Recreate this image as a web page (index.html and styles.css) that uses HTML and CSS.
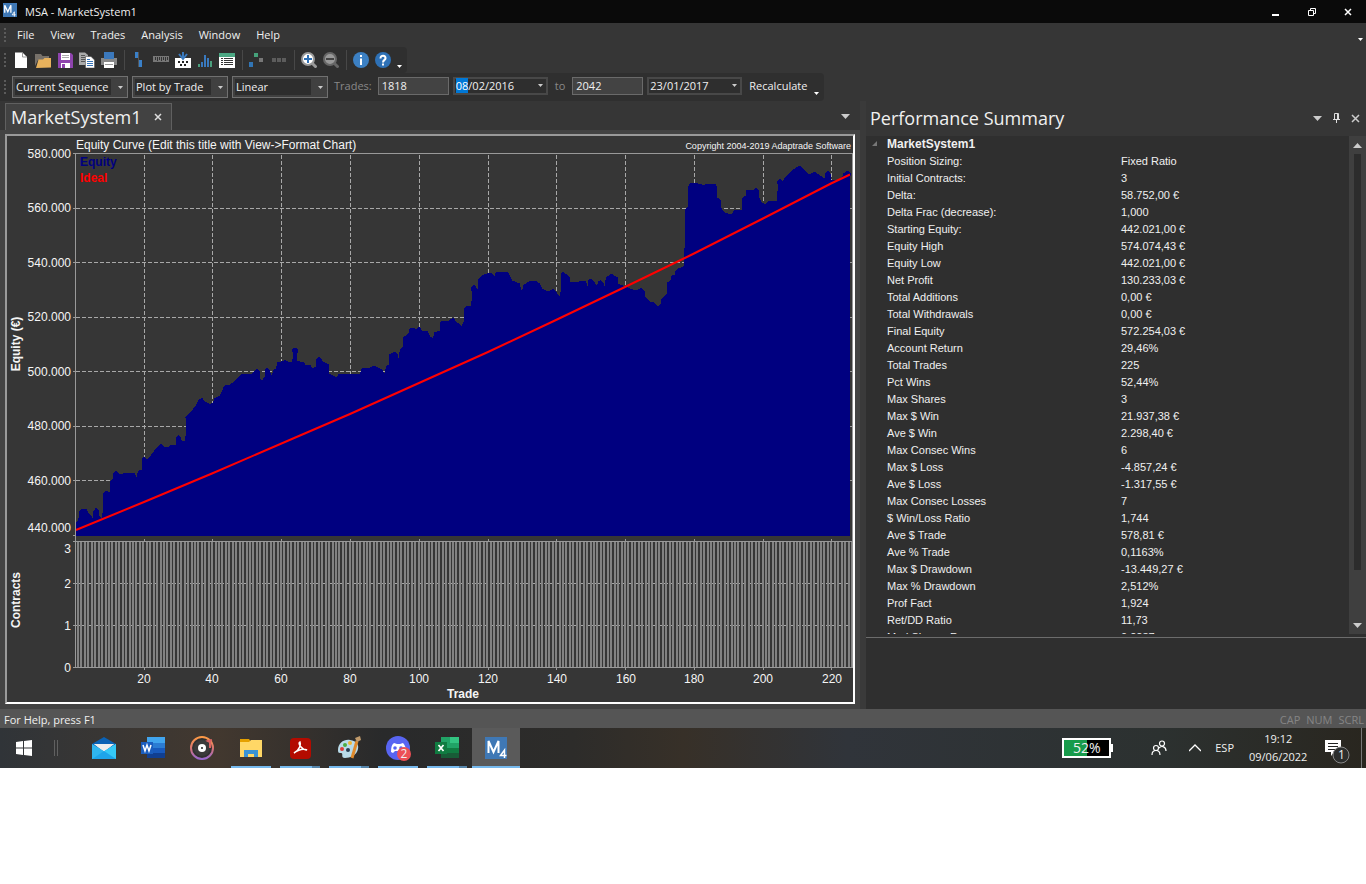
FILE: index.html
```html
<!DOCTYPE html>
<html lang="en">
<head>
<meta charset="utf-8">
<title>MSA - MarketSystem1</title>
<link rel="stylesheet" href="styles.css">
</head>
<body>
<div class="app">
  <header class="titlebar">
    <svg class="app-icon" viewBox="0 0 32 32"><rect width="32" height="32" fill="#3f78b5"/><path d="M4 22V5l7 15 7-15v17" fill="none" stroke="#fff" stroke-width="3"/><path d="M26 31V20l-5 7h8" fill="none" stroke="#fff" stroke-width="2"/></svg>
    <h1 class="title">MSA - MarketSystem1</h1>
    <div class="window-buttons">
      <button aria-label="Minimize"><svg viewBox="0 0 10 10"><path d="M1 8h7" stroke="#fff" stroke-width="2"/></svg></button>
      <button aria-label="Restore"><svg viewBox="0 0 10 10"><path d="M1.500 3.500h5v5h-5zM3.500 3V1.500h5v5H7" fill="none" stroke="#fff"/></svg></button>
      <button aria-label="Close"><svg viewBox="0 0 10 10"><path d="M2 2l6 6M8 2L2 8" stroke="#fff" stroke-width="1.500"/></svg></button>
    </div>
  </header>

  <nav class="menubar">
    <span class="grip"></span>
    <button>File</button><button>View</button><button>Trades</button><button>Analysis</button><button>Window</button><button>Help</button>
    <svg class="menu-more" viewBox="0 0 5 3"><path d="M0 0h5L2.500 3z" fill="#fff"/></svg>
  </nav>

  <div class="toolbar tools">
    <span class="grip"></span>
    <button aria-label="New"><svg viewBox="0 0 16 16"><path d="M2 .5h7.500L14 5v11H2z" fill="#fff"/><path d="M9.500.5V5H14" fill="none" stroke="#999"/></svg></button>
    <button aria-label="Open"><svg viewBox="0 0 16 16"><path d="M0 14V2h6l1.500 2H14V8H3z" fill="#77716a"/><path d="M3.500 7.500H8L9.500 6H16v9.500l-15 .5z" fill="#e8b25c"/></svg></button>
    <button aria-label="Save"><svg viewBox="0 0 16 16"><path d="M1 1h13l2 2v13H1z" fill="#8e44ad"/><path d="M4 1h9v7H4zM4 11h9v5H4z" fill="#fff"/><path d="M5 3.500h7M5 5.500h7" stroke="#aaa"/><path d="M5 12h3v4H5z" fill="#8e44ad"/></svg></button>
    <button aria-label="Copy"><svg viewBox="0 0 16 16"><path d="M0 .5h6L9 3v10H0z" fill="#aaa"/><path d="M2 3.500h4M2 5.500h5M2 7.500h5M2 9.500h4" stroke="#555"/><path d="M6.500 4.500H12L15.500 8v8h-9z" fill="#fff" stroke="#444" stroke-width=".5"/><path d="M8 7.500h3M8 9.500h6M8 11.500h6M8 13.500h6" stroke="#3874b8"/></svg></button>
    <button aria-label="Print"><svg viewBox="0 0 16 16"><path d="M3 0h10v4H3z" fill="#3b78bb"/><path d="M0 6h16v7H0z" fill="#888"/><path d="M3 1h10v6H3z" fill="#3b78bb"/><path d="M3 10h10v6H3z" fill="#fff"/><path d="M4 12.500h8" stroke="#999"/></svg></button>
    <span class="sep"></span>
    <button aria-label="Trade bars"><svg viewBox="0 0 16 16"><path d="M4 0h3v6H4zM8 8h3v7H8z" fill="#3a80c8"/><path d="M7.500 0v15" stroke="#555"/></svg></button>
    <button aria-label="Ruler"><svg viewBox="0 0 16 16"><path d="M0 4h16v6H0z" fill="#777"/><path d="M2.500 5v3M4.500 5v4M6.500 5v3M8.500 5v4M10.500 5v3M12.500 5v4M14.500 5v3" stroke="#333"/></svg></button>
    <button aria-label="Randomize"><svg viewBox="0 0 16 16"><path d="M0 6h16v10H0z" fill="#fff"/><path d="M3 9h2v2H3zm4 0h2v2H7zm4 0h2v2h-2zM5 12h2v2H5zm4 0h2v2H9z" fill="#222"/><path d="M8 0v6M4 2l4 5 4-5" fill="none" stroke="#3979be" stroke-width="2"/></svg></button>
    <button aria-label="Histogram"><svg viewBox="0 0 16 16"><path d="M1 12h2v3H1zm12-3h2v6h-2z" fill="#4b9f7d"/><path d="M4 10h2v5H4zm3-7h2v12H7zm3 3h2v9h-2z" fill="#3979be"/></svg></button>
    <button aria-label="Report"><svg viewBox="0 0 16 16"><path d="M0 1h16v15H0z" fill="#fff"/><path d="M0 1h16v4H0z" fill="#4ba783"/><path d="M2 6.500h2M5 6.500h9M2 8.500h2M5 8.500h9M2 10.500h2M5 10.500h9M2 12.500h2M5 12.500h9" stroke="#333"/></svg></button>
    <span class="sep"></span>
    <button aria-label="Dependency"><svg viewBox="0 0 16 16"><path d="M5 1h4v4H5z" fill="#45a17a"/><path d="M0 10h4v5H0z" fill="#3175b5"/><path d="M10 6h4v4h-4z" fill="#777"/></svg></button>
    <button aria-label="Sequence"><svg viewBox="0 0 16 16"><path d="M1 6h4v4H1zm5 0h4v4H6zm5 0h4v4h-4z" fill="#5c5c5c"/></svg></button>
    <span class="sep"></span>
    <button aria-label="Zoom in"><svg viewBox="0 0 16 16"><path d="M10.500 10.500l5 5" stroke="#999" stroke-width="3"/><circle cx="7" cy="7" r="6" fill="#fff" stroke="#999" stroke-width="2"/><path d="M7 3v8M3 7h8" stroke="#2f70b5" stroke-width="2"/></svg></button>
    <button aria-label="Zoom out"><svg viewBox="0 0 16 16"><path d="M10.500 10.500l5 5" stroke="#666" stroke-width="3"/><circle cx="7" cy="7" r="6" fill="#999" stroke="#666" stroke-width="2"/><path d="M3 7h8" stroke="#444" stroke-width="2"/></svg></button>
    <span class="sep"></span>
    <button aria-label="About"><svg viewBox="0 0 16 16"><circle cx="8" cy="8" r="8" fill="#3c80c3"/><path d="M8 3v2M8 6.500V13" stroke="#fff" stroke-width="2"/></svg></button>
    <button aria-label="Help"><svg viewBox="0 0 16 16"><circle cx="8" cy="8" r="8" fill="#2e71b6"/><path d="M5.500 6.500C5.500 2.500 11 3 10.500 6.500 10.300 8 8 8 8 10.500M8 11.500v2" fill="none" stroke="#fff" stroke-width="2"/></svg></button>
    <svg class="more" viewBox="0 0 5 3"><path d="M0 0h5L2.500 3z" fill="#fff"/></svg>
  </div>

  <div class="toolbar options">
    <span class="grip"></span>
    <div class="combo wide"><select aria-label="Sequence"><option>Current Sequence</option></select><svg viewBox="0 0 5 3"><path d="M0 0h5L2.500 3z" fill="#ccc"/></svg></div>
    <div class="combo"><select aria-label="Plot mode"><option>Plot by Trade</option></select><svg viewBox="0 0 5 3"><path d="M0 0h5L2.500 3z" fill="#ccc"/></svg></div>
    <div class="combo"><select aria-label="Scale"><option>Linear</option></select><svg viewBox="0 0 5 3"><path d="M0 0h5L2.500 3z" fill="#ccc"/></svg></div>
    <label class="caption trades" for="first">Trades:</label>
    <input id="first" value="1818">
    <button class="date" aria-label="Start date"><span><mark>08</mark>/02/2016</span><svg viewBox="0 0 5 3"><path d="M0 0h5L2.500 3z" fill="#ccc"/></svg></button>
    <label class="caption" for="last">to</label>
    <input id="last" value="2042">
    <button class="date" aria-label="End date"><span>23/01/2017</span><svg viewBox="0 0 5 3"><path d="M0 0h5L2.500 3z" fill="#ccc"/></svg></button>
    <button class="recalc">Recalculate</button>
    <svg class="more" viewBox="0 0 5 3"><path d="M0 0h5L2.500 3z" fill="#fff"/></svg>
  </div>

  <main class="workspace">
    <section class="document">
      <div class="tabs">
        <div class="tab"><span>MarketSystem1</span><button aria-label="Close tab"><svg viewBox="0 0 8 8"><path d="M1 1l6 6M7 1L1 7" stroke="#ddd" stroke-width="1.500"/></svg></button></div>
        <button class="tab-menu" aria-label="Open documents"><svg viewBox="0 0 9 5"><path d="M0 0h9L4.500 5z" fill="#ccc"/></svg></button>
      </div>
      <div class="chart-area">
        <div class="chart-frame">
          <svg class="chart" viewBox="7 136 846 566" role="img" aria-label="Equity curve">
            <g class="grid">
              <path d="M76 208.500H850M76 262.500H850M76 317.500H850M76 371.500H850M76 426.500H850M76 480.500H850"/>
              <path d="M144.500 155V535M212.500 155V535M281.500 155V535M350.500 155V535M419.500 155V535M488.500 155V535M556.500 155V535M625.500 155V535M694.500 155V535M763.500 155V535M831.500 155V535"/>
              <path d="M76 583.500H850M76 625.500H850"/>
            </g>
            <path class="equity" d="M76 535.500L76 522.500 78 521 79.500 511.500 81.500 508.500 86.500 509 88.500 513 91 515 92.500 518 93 512 96 507.500 99 510 99.500 516 102 518 103 508 103.500 492.500 105.500 490.500 109.500 492 110.500 481.500 113 478.500 113 473 116 470.500 119 474 126 473 134.500 473 136.500 477.500 138 471 141.500 469.500 141.500 459 144 456.500 147 459 149.500 457.500 153.500 451.500 156.500 447.500 160.500 443.500 164 446.500 168.500 446.500 171 444.500 175.500 445.500 175.500 437.500 178 435 180.500 437.500 181 440 185 441.500 186 430 185.500 417.500 187.500 415 191.500 411 195 406.500 199 399.500 202 397.500 204.500 401.500 209.500 404 212.500 402.500 214.500 398.500 220 395.500 223.500 387.500 226 384.500 230 384.500 235 380.500 241.500 374 252.500 373.500 256.500 368.500 259.500 371.500 260 378.500 262 380.500 264.500 376.500 264.500 370 267 367.500 269.500 370 271.500 375.500 273.500 370 276 368.500 277.500 362 281.500 361.500 285 360 288.500 362 292 361.500 293.500 355 292 351 292.500 349 295 347.500 297.500 349 298 351 297 355 297.500 361 304 362.500 306 365.500 310 364.500 312.500 368 316.500 366 316 359.500 319 356.500 322 359.500 322.500 361.500 328.500 364 329.500 373.500 336.500 377.500 338.500 374 360 373.500 362 368 370 367.500 374 365.500 378.500 368 382 369.500 384.500 373.500 386 366.500 388.500 364.500 388.500 355 394.500 351.500 397.500 354.500 398.500 358.500 400 349 403 346.500 402.500 337.500 408.500 333.500 409.500 328.500 412 327.500 416.500 329 419 326.500 422.500 331 428 331.500 430 336.500 433 338.500 434.500 332 439.500 331 440.500 321.500 448.500 321 453 317.500 456.500 322 461.500 325.500 464 321.500 464 308.500 466.500 305.500 471 306.500 472 295 471 287.500 474 284.500 477.500 289 478.500 278.500 483.500 274.500 490.500 272.500 494.500 276.500 495.500 272.500 500 271.500 507.500 271.500 510.500 276.500 512 280.500 519.500 283.500 522 291.500 523.500 285 528.500 281.500 535 280.500 539.500 283.500 542.500 289 547.500 291.500 553.500 288.500 559.500 296.500 561 290 560.500 274 562.500 271.500 569.500 276.500 570 282 576.500 282.500 580.500 280.500 586 281 587.500 286.500 588.500 280 590.500 278.500 594 281.500 596.500 285.500 598.500 281.500 600.500 280 603.500 282.500 604.500 285.500 606 277.500 611 273.500 617.500 277.500 618 283.500 625 286.500 635 290.500 641.500 288 644.500 290.500 645.500 296.500 650 301.500 654 302 657.500 306.500 660.500 304 661 299.500 666.500 294.500 667.500 282.500 670.500 280 671.500 275.500 675 274.500 674.500 271.500 677.500 268.500 683.500 266.500 685.500 230 684.500 210 687.500 207.500 688.500 195 687.500 187.500 690 183.500 694.500 182.500 703.500 185 708.500 183.500 715 183.500 717 187.500 717.500 197.500 720.500 200.500 721.500 208.500 725 212.500 731.500 214.500 734 210.500 742 209.500 742.500 197.500 746 195.500 746.500 190 753.500 189.500 756 187.500 759 190.500 759.500 198.500 762 202.500 765.500 204 768.500 200.500 776.500 201 778 186.500 777 181.500 779.500 178.500 782.500 181 786.500 176 794 169 799.500 165.500 802.500 168.500 806.500 172.500 810 174.500 814 171.500 825 178.500 825 173.500 828 170.500 830.500 173.500 830.500 180 836.500 180.500 842.500 176.500 843.500 173.500 847.500 170.500 851.500 173.500 850 176.500 850 535.500Z"/>
            <path class="ideal" d="M76 530L144 502 212 473.500 300 435.500 350 414 419 383 488 352 556 320 625 287 694 253.500 763 218.500 831 183.500 850 174.500"/>
            <path class="bars" d="M77 604.500H852"/>
            <g class="axes">
              <path d="M75.500 153V668M852.500 153V668M73 153.500H853M73 535.500H76M73 541.500H853M73 667.500H853M73 208.500h3M73 262.500h3M73 317.500h3M73 371.500h3M73 426.500h3M73 480.500h3M73 583.500h3M73 625.500h3M850 208.500h3M850 262.500h3M850 317.500h3M850 371.500h3M850 426.500h3M850 480.500h3"/>
              <path d="M144.500 668v2M212.500 668v2M281.500 668v2M350.500 668v2M419.500 668v2M488.500 668v2M556.500 668v2M625.500 668v2M694.500 668v2M763.500 668v2M831.500 668v2M144.500 539v3M212.500 539v3M281.500 539v3M350.500 539v3M419.500 539v3M488.500 539v3M556.500 539v3M625.500 539v3M694.500 539v3M763.500 539v3M831.500 539v3"/>
            </g>
            <text x="76" y="149">Equity Curve (Edit this title with View-&gt;Format Chart)</text>
            <text class="copyright" x="851" y="149">Copyright 2004-2019 Adaptrade Software</text>
            <text class="bold navy" x="80" y="166">Equity</text>
            <text class="bold red" x="80" y="182">Ideal</text>
            <g class="y-labels">
              <text x="71" y="158">580.000</text><text x="71" y="212">560.000</text><text x="71" y="267">540.000</text><text x="71" y="321">520.000</text><text x="71" y="376">500.000</text><text x="71" y="430">480.000</text><text x="71" y="485">460.000</text><text x="71" y="532">440.000</text>
              <text x="71" y="553">3</text><text x="71" y="588">2</text><text x="71" y="630">1</text><text x="71" y="672">0</text>
            </g>
            <g class="x-labels">
              <text x="144" y="683">20</text><text x="212" y="683">40</text><text x="281" y="683">60</text><text x="350" y="683">80</text><text x="419" y="683">100</text><text x="488" y="683">120</text><text x="557" y="683">140</text><text x="626" y="683">160</text><text x="694" y="683">180</text><text x="763" y="683">200</text><text x="832" y="683">220</text>
              <text class="bold" x="463" y="698">Trade</text>
              <text class="bold" transform="translate(20 344) rotate(-90)">Equity (€)</text>
              <text class="bold" transform="translate(20 600) rotate(-90)">Contracts</text>
            </g>
          </svg>
        </div>
      </div>
    </section>

    <aside class="panel">
      <div class="panel-head">
        <h2>Performance Summary</h2>
        <button aria-label="Panel menu"><svg viewBox="0 0 10 10"><path d="M1 3h9L5.500 8z" fill="#ccc"/></svg></button>
        <button aria-label="Pin"><svg viewBox="0 0 10 10"><path d="M3.500 6V.5h4V6M2 6.500h7M5.500 7v3M6.500 1v5" fill="none" stroke="#ddd"/></svg></button>
        <button aria-label="Close panel"><svg viewBox="0 0 10 10"><path d="M2 2l7 7M9 2L2 9" stroke="#ccc" stroke-width="1.500"/></svg></button>
      </div>
      <div class="list">
        <table>
          <tbody>
          <tr><th colspan="2"><svg viewBox="0 0 5 5"><path d="M5 0v5H0z" fill="#777"/></svg>MarketSystem1</th></tr>
          <tr><td>Position Sizing:</td><td>Fixed Ratio</td></tr>
          <tr><td>Initial Contracts:</td><td>3</td></tr>
          <tr><td>Delta:</td><td>58.752,00 €</td></tr>
          <tr><td>Delta Frac (decrease):</td><td>1,000</td></tr>
          <tr><td>Starting Equity:</td><td>442.021,00 €</td></tr>
          <tr><td>Equity High</td><td>574.074,43 €</td></tr>
          <tr><td>Equity Low</td><td>442.021,00 €</td></tr>
          <tr><td>Net Profit</td><td>130.233,03 €</td></tr>
          <tr><td>Total Additions</td><td>0,00 €</td></tr>
          <tr><td>Total Withdrawals</td><td>0,00 €</td></tr>
          <tr><td>Final Equity</td><td>572.254,03 €</td></tr>
          <tr><td>Account Return</td><td>29,46%</td></tr>
          <tr><td>Total Trades</td><td>225</td></tr>
          <tr><td>Pct Wins</td><td>52,44%</td></tr>
          <tr><td>Max Shares</td><td>3</td></tr>
          <tr><td>Max $ Win</td><td>21.937,38 €</td></tr>
          <tr><td>Ave $ Win</td><td>2.298,40 €</td></tr>
          <tr><td>Max Consec Wins</td><td>6</td></tr>
          <tr><td>Max $ Loss</td><td>-4.857,24 €</td></tr>
          <tr><td>Ave $ Loss</td><td>-1.317,55 €</td></tr>
          <tr><td>Max Consec Losses</td><td>7</td></tr>
          <tr><td>$ Win/Loss Ratio</td><td>1,744</td></tr>
          <tr><td>Ave $ Trade</td><td>578,81 €</td></tr>
          <tr><td>Ave % Trade</td><td>0,1163%</td></tr>
          <tr><td>Max $ Drawdown</td><td>-13.449,27 €</td></tr>
          <tr><td>Max % Drawdown</td><td>2,512%</td></tr>
          <tr><td>Prof Fact</td><td>1,924</td></tr>
          <tr><td>Ret/DD Ratio</td><td>11,73</td></tr>
          <tr><td>Mod Sharpe R</td><td>0,2237</td></tr>
          </tbody>
        </table>
        <div class="scrollbar">
          <button aria-label="Scroll up"><svg viewBox="0 0 9 5"><path d="M0 5h9L4.500 0z" fill="#ccc"/></svg></button>
          <div class="thumb"></div>
          <button aria-label="Scroll down"><svg viewBox="0 0 9 5"><path d="M0 0h9L4.500 5z" fill="#ccc"/></svg></button>
        </div>
      </div>
      <div class="description"></div>
    </aside>
  </main>

  <footer class="statusbar"><span class="hint">For Help, press F1</span><span>CAP</span><span>NUM</span><span>SCRL</span></footer>
</div>

<div class="taskbar">
  <button class="start" aria-label="Start"><svg viewBox="0 0 16 16"><path d="M0 2l7-1v6.500H0zM8 1l8-1v7.500H8zM0 8.500h7V15l-7-1zM8 8.500h8V16l-8-1z" fill="#fff"/></svg></button>
  <span class="task-sep"></span>
  <div class="tasks">
    <button aria-label="Mail"><svg viewBox="0 0 24 24"><path d="M0 8L12 1l12 7v6H0z" fill="#0b62b5"/><path d="M2 8h20l-10 8z" fill="#eee"/><path d="M0 8l12 7 12-7v15H0z" fill="#2fb5ee"/><path d="M0 23L24 8v15z" fill="#35c9f7"/><path d="M2 8h20l-10 7z" fill="#eee"/><path d="M0 23l12-8 12 8z" fill="#1ea4ea"/></svg></button>
    <button aria-label="Word"><svg viewBox="0 0 24 24"><path d="M6 1h18v6H6z" fill="#41a5ee"/><path d="M6 7h18v5H6z" fill="#2b7cd3"/><path d="M6 12h18v5H6z" fill="#185abd"/><path d="M6 17h18v5H6z" fill="#103f91"/><path d="M0 6h12v12H0z" fill="#1b5ebe"/><path d="M2 9l2 6 2-6 2 6 2-6" fill="none" stroke="#fff" stroke-width="1.500"/></svg></button>
    <button aria-label="Music"><svg viewBox="0 0 24 24"><defs><linearGradient id="ring" x2="0" y2="1"><stop stop-color="#ff9b45"/><stop offset=".5" stop-color="#d87572"/><stop offset="1" stop-color="#9868d0"/></linearGradient></defs><circle cx="12" cy="12" r="11" fill="#303030" stroke="url(#ring)" stroke-width="2"/><circle cx="12" cy="12" r="8" fill="#3a3a3a"/><circle cx="12" cy="12" r="4" fill="#fff"/><circle cx="12" cy="12" r="1" fill="#222"/><path d="M20 12V6l-2-1 4-1" fill="none" stroke="#d96363" stroke-width="2"/></svg></button>
    <button class="open" aria-label="File Explorer"><svg viewBox="0 0 24 24"><path d="M1 3h9l2 3H1z" fill="#e5a000"/><path d="M1 6h9l2-2h11v17H1z" fill="#ffd766"/><path d="M5 21v-7h14v7h-4v-3H9v3z" fill="#3993d5"/></svg></button>
    <button class="open multi" aria-label="Acrobat"><svg viewBox="0 0 24 24"><rect x="2" y="2" width="21" height="21" rx="4" fill="#b30b00"/><path d="M6 17c6-3 7-9 6-11-3 1 2 8 7 8-4-2-9 0-13 3z" fill="none" stroke="#fff" stroke-width="1.500"/></svg></button>
    <button class="open multi" aria-label="Paint"><svg viewBox="0 0 24 24"><path d="M1 14C1 7 7 3 13 4c7 1 9 5 8 9-1 6-8 9-13 9-5 0-1-5-4-5-2 0-3 0-3-3z" fill="#b9dbe9"/><circle cx="5" cy="13" r="2" fill="#dc3d3a"/><circle cx="8" cy="9" r="2" fill="#4cab42"/><circle cx="13" cy="7" r="2" fill="#efb433"/><circle cx="11" cy="14" r="2" fill="#263b51"/><path d="M20 5l-5 17" stroke="#df8a2c" stroke-width="3"/><path d="M18 2l5-2 1 4-4 2z" fill="#c09a6b"/></svg></button>
    <button class="open" aria-label="Discord, 2 notifications"><svg viewBox="0 0 24 24"><circle cx="12" cy="12" r="12" fill="#5865f2"/><path d="M5 16c0-5 1-8 3-9l3 1h3l3-1c2 2 3 5 3 8l-3 2-2-2H9l-2 2z" fill="#fff"/><circle cx="9" cy="12" r="1.800" fill="#5865f2"/><circle cx="15" cy="12" r="1.800" fill="#5865f2"/></svg><span class="badge">2</span></button>
    <button class="open multi" aria-label="Excel"><svg viewBox="0 0 24 24"><path d="M6 1h9v6H6z" fill="#21a366"/><path d="M15 1h9v6h-9z" fill="#33c481"/><path d="M6 7h18v5H6z" fill="#21a366"/><path d="M6 12h18v10H6z" fill="#107c41"/><path d="M6 17h18v5H6z" fill="#185c37"/><path d="M0 6h12v12H0z" fill="#107c41"/><path d="M3.500 9l5 6M8.500 9l-5 6" stroke="#fff" stroke-width="1.700"/></svg></button>
    <button class="open active" aria-label="MSA"><svg viewBox="0 0 24 24"><path d="M1 1h22v22H1z" fill="#3f78b5"/><path d="M4.500 17V5l5 11 5-11v12" fill="none" stroke="#fff" stroke-width="2"/><path d="M20.500 22v-8l-4 5.500h6" fill="none" stroke="#fff" stroke-width="1.500"/></svg></button>
  </div>
  <div class="tray">
    <div class="battery">52%</div>
    <button class="people" aria-label="People"><svg viewBox="0 0 16 16"><g fill="none" stroke="#fff" stroke-width="1.200"><circle cx="5" cy="8" r="2.500"/><path d="M1 15c0-6 8-6 8 0"/><circle cx="11" cy="3.500" r="2.500"/><path d="M8 8c3-3 7-1 7 3"/></g></svg></button>
    <button class="chevron" aria-label="Hidden icons"><svg viewBox="0 0 12 8"><path d="M0 7l6-6 6 6" fill="none" stroke="#fff" stroke-width="1.300"/></svg></button>
    <button class="lang">ESP</button>
    <div class="clock"><time>19:12</time><time>09/06/2022</time></div>
    <button class="notes" aria-label="1 notification"><svg viewBox="0 0 25 25"><path d="M0 1h16v12H9l-3 4v-4H0z" fill="#fff"/><path d="M3 4.500h10M3 7.500h10M3 10.500h7" stroke="#222"/><circle cx="16" cy="16" r="8" fill="#2c2e2d" stroke="#888"/></svg><span>1</span></button>
  </div>
</div>
</body>
</html>
```
FILE: styles.css
```css
* { box-sizing: border-box; }
body { margin: 0; background: #fff; color: #f0f0f0; font: 11px/16px "Open Sans", "Noto Sans", sans-serif; }
button { margin: 0; padding: 0; border: 0; background: none; color: inherit; font: inherit; display: flex; align-items: center; justify-content: center; }
svg { display: block; flex: none; }
.app { background: #363636; }

.titlebar { display: flex; align-items: center; height: 23px; background: #0a0a0a; padding-left: 3px; }
.app-icon { width: 14px; height: 14px; margin-bottom: 3px; }
.title { flex: 1; margin: 0 0 0 8px; font-size: 11px; font-weight: 400; }
.window-buttons { display: flex; }
.window-buttons button { width: 36px; height: 22px; }
.window-buttons svg { width: 10px; height: 10px; }

.grip { flex: none; width: 2px; height: 14px; background: repeating-linear-gradient(#5b5b5b 0 2px, transparent 2px 4px); }
.menubar { display: flex; align-items: center; height: 24px; padding: 0 3px 0 4px; }
.menubar button { padding: 0 8px; }
.menubar .grip + button { margin-left: 3px; }
.menu-more { width: 5px; height: 3px; margin: 8px 0 0 auto; }

.toolbar { display: flex; align-items: center; width: fit-content; background: #2f2f2f; border-radius: 0 4px 4px 0; padding-left: 4px; }
.tools { height: 26px; }
.tools .grip { margin-right: 4px; }
.tools button { width: 22px; height: 22px; }
.tools button svg { width: 16px; height: 16px; }
.sep { width: 8px; height: 20px; background: linear-gradient(#484848, #484848) center / 1px 100% no-repeat; }
.more { width: 5px; height: 3px; margin: 12px 5px 0 3px; }
.options { height: 28px; gap: 4px; }
.options .grip { margin-right: 2px; }
.combo { position: relative; width: 96px; height: 22px; }
.wide { width: 116px; }
.combo select { appearance: none; width: 100%; height: 100%; padding: 0 0 0 3px; border: 1px solid #707070; border-radius: 0; outline: 0; color: inherit; font: inherit; background: linear-gradient(#2d2d2d, #2d2d2d) 2px 2px / calc(100% - 18px) calc(100% - 4px) no-repeat #404040; }
.combo svg { position: absolute; right: 5px; top: 10px; width: 5px; height: 3px; }
.caption { color: #888; padding: 0 3px 2px; }
.trades { padding: 0 2px 2px; }
.options input { width: 71px; height: 18px; margin: 0 0 2px; padding: 0 0 1px 3px; border: 1px solid #6a6a6a; background: #434343; color: inherit; font: inherit; outline: 0; }
.date { width: 95px; height: 18px; margin-bottom: 2px; border: 2px solid #484848; background: #2e2e2e; justify-content: space-between; padding: 0 3px 1px 1px; }
.date svg { width: 5px; height: 3px; }
mark { background: #0078d7; color: #fff; }
.recalc { padding: 0 0 2px 3px; }

.workspace { display: flex; }
.document { flex: 1; min-width: 0; }
.tabs { display: flex; justify-content: space-between; height: 29px; padding: 2px 10px 0 5px; }
.tab { display: flex; align-items: center; width: 167px; background: #424242; border: 1px solid #606060; border-bottom: 0; padding: 0 9px 0 5px; font-size: 18px; line-height: 24px; justify-content: space-between; }
.tab button, .tab svg { width: 8px; height: 8px; }
.tab-menu svg { width: 9px; height: 5px; }
.chart-area { padding: 4px 5px 5px; background: #434343; }
.chart-frame { border: 2px solid; border-color: #9a9a9a #fff #fff #9a9a9a; background: #363636; }
.chart { width: 100%; height: auto; font: 12px "Liberation Sans", Arial, sans-serif; fill: #f5f5f5; }
.grid { stroke: #a8a8a8; stroke-dasharray: 4 2; shape-rendering: crispEdges; }
.equity { fill: #000080; shape-rendering: crispEdges; }
.ideal { fill: none; stroke: #f00; stroke-width: 2; }
.bars { stroke: #828282; stroke-width: 126; stroke-dasharray: 2 1.44; shape-rendering: crispEdges; }
.axes { fill: none; stroke: #999; shape-rendering: crispEdges; }
.bold { font-weight: 700; }
.navy { fill: #000080; }
.red { fill: #f00; }
.copyright { text-anchor: end; font-size: 9px; }
.y-labels { text-anchor: end; }
.x-labels { text-anchor: middle; }

.panel { display: flex; flex-direction: column; flex: none; width: 506px; border-left: 6px solid #3a3a3a; background: #2f2f2f; }
.panel-head { display: flex; align-items: center; height: 35px; background: #363636; padding: 0 6px 2px 4px; gap: 9px; }
.panel-head h2 { flex: 1; margin: 0; font-size: 18px; line-height: 24px; font-weight: 400; }
.panel-head button, .panel-head svg { width: 10px; height: 10px; }
.list { flex: 1; contain: size; overflow: hidden; display: flex; align-items: flex-start; margin-bottom: 3px; }
table { flex: 1; border-collapse: collapse; table-layout: fixed; font: 11px/17px "Liberation Sans", Arial, sans-serif; }
td, th { padding: 0; height: 17px; text-align: left; white-space: nowrap; }
td:first-child { padding-left: 21px; width: 255px; }
th { font-size: 12px; }
th svg { display: inline-block; width: 5px; height: 5px; margin: 0 10px 2px 6px; }
.scrollbar { display: flex; flex-direction: column; width: 17px; height: 100%; background: #3f3f3f; align-items: center; }
.scrollbar button { width: 17px; height: 18px; }
.scrollbar svg { width: 9px; height: 5px; }
.thumb { flex: 1; width: 7px; margin-bottom: 46px; background: #2c2c2c; }
.description { height: 72px; border-top: 1px solid #6c6c6c; }

.statusbar { display: flex; align-items: center; gap: 6px; height: 19px; padding: 2px 2px 0 4px; background: #555; color: #858585; }
.hint { flex: 1; color: #f0f0f0; }

.taskbar { display: flex; align-items: center; height: 40px; background: linear-gradient(90deg, #303438 0, #42382f 16%, #292a2b 28%, #2d2c2a 42%, #373028 50%, #30343a 62%, #2c3130 85%, #29261f 100%); }
.start { width: 48px; height: 40px; }
.start svg { width: 16px; height: 16px; }
.task-sep { width: 4px; height: 16px; margin: 0 22px 0 6px; border: solid #606060; border-width: 0 1px; }
.tasks { display: flex; gap: 1px; }
.tasks button { position: relative; width: 48px; height: 40px; }
.tasks svg { width: 24px; height: 24px; }
.open::after { content: ""; position: absolute; inset: auto 4px 0; height: 2px; background: #76b9ed; }
.multi::after { background: linear-gradient(90deg, #76b9ed 80%, #5685aa 80%); }
.tasks .active { background: #5a5a5a; }
.active::after { inset: auto 0 0; }
.badge { position: absolute; left: 23px; top: 19px; width: 14px; height: 14px; border-radius: 50%; background: #ed4f55; font-size: 12px; line-height: 14px; }
.tray { display: flex; align-items: center; margin-left: auto; padding-right: 4px; }
.battery { position: relative; width: 49px; height: 20px; border: 2px solid #fff; background: linear-gradient(90deg, #189b4b 50%, #000 50%); font-size: 14px; line-height: 16px; text-align: center; }
.battery::after { content: ""; position: absolute; right: -4px; top: 4px; width: 2px; height: 8px; background: #fff; }
.people { margin-left: 40px; }
.people svg { width: 16px; height: 16px; }
.chevron { margin-left: 22px; }
.chevron svg { width: 12px; height: 8px; }
.lang { margin-left: 14px; }
.clock { display: grid; width: 58px; margin-left: 15px; line-height: 18px; text-align: center; }
.notes { position: relative; margin-left: 18px; width: 37px; height: 40px; border-right: 1px solid #777; justify-content: flex-start; }
.notes svg { width: 25px; height: 25px; margin-top: 7px; }
.notes span { position: absolute; left: 13px; top: 19px; font-size: 12px; line-height: 15px; }
```
